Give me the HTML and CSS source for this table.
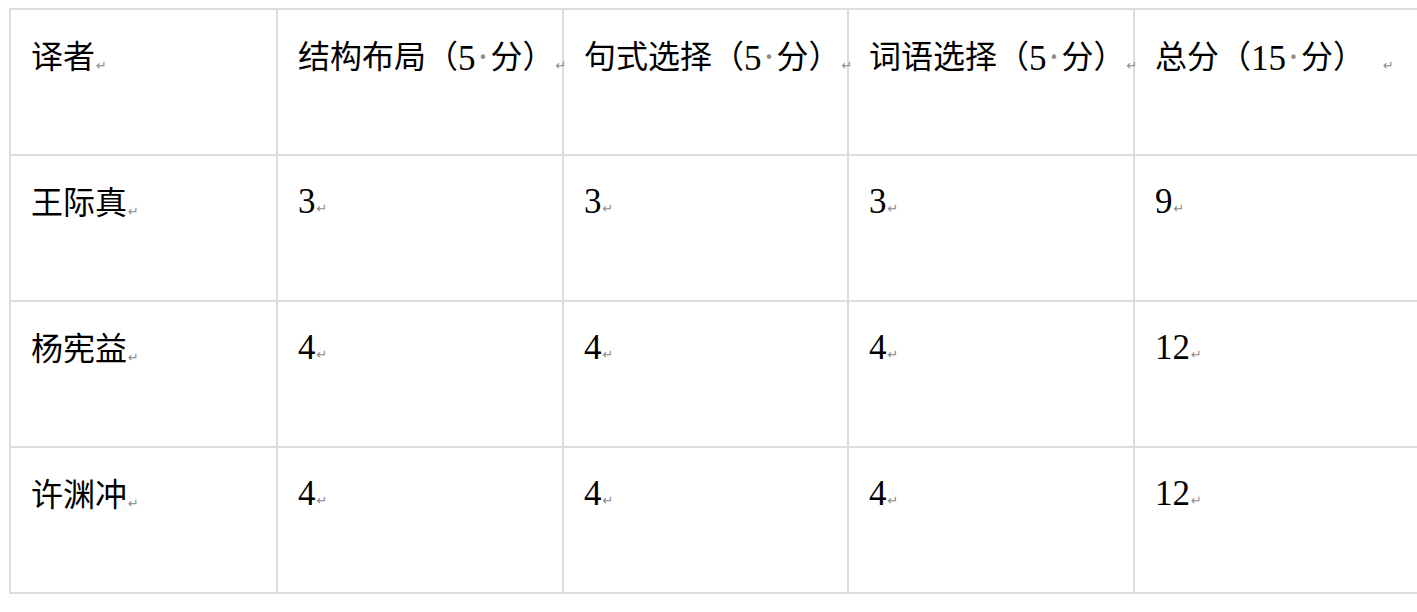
FILE: index.html
```html
<!DOCTYPE html>
<html lang="zh-CN">
<head>
<meta charset="utf-8">
<title>评分表</title>
<link rel="stylesheet" href="styles.css">
</head>
<body>
<div class="sheet">
  <div class="grid">
    <div class="cell"><span class="zh">译者</span><span class="pm">↵</span></div>
    <div class="cell"><span class="zh">结构布局（</span><span class="num">5</span><span class="sp">•</span><span class="zh">分）</span><span class="pm">↵</span></div>
    <div class="cell"><span class="zh">句式选择（</span><span class="num">5</span><span class="sp">•</span><span class="zh">分）</span><span class="pm">↵</span></div>
    <div class="cell"><span class="zh">词语选择（</span><span class="num">5</span><span class="sp">•</span><span class="zh">分）</span><span class="pm">↵</span></div>
    <div class="cell"><span class="zh">总分（</span><span class="num">15</span><span class="sp">•</span><span class="zh">分）</span><span class="pm gap">↵</span></div>

    <div class="cell"><span class="zh">王际真</span><span class="pm">↵</span></div>
    <div class="cell"><span class="num">3</span><span class="pm">↵</span></div>
    <div class="cell"><span class="num">3</span><span class="pm">↵</span></div>
    <div class="cell"><span class="num">3</span><span class="pm">↵</span></div>
    <div class="cell"><span class="num">9</span><span class="pm">↵</span></div>

    <div class="cell"><span class="zh">杨宪益</span><span class="pm">↵</span></div>
    <div class="cell"><span class="num">4</span><span class="pm">↵</span></div>
    <div class="cell"><span class="num">4</span><span class="pm">↵</span></div>
    <div class="cell"><span class="num">4</span><span class="pm">↵</span></div>
    <div class="cell"><span class="num">12</span><span class="pm">↵</span></div>

    <div class="cell"><span class="zh">许渊冲</span><span class="pm">↵</span></div>
    <div class="cell"><span class="num">4</span><span class="pm">↵</span></div>
    <div class="cell"><span class="num">4</span><span class="pm">↵</span></div>
    <div class="cell"><span class="num">4</span><span class="pm">↵</span></div>
    <div class="cell"><span class="num">12</span><span class="pm">↵</span></div>
  </div>
</div>
</body>
</html>
```

FILE: styles.css
```css
html, body {
  margin: 0;
  padding: 0;
  background: #ffffff;
  overflow: hidden;
}

.sheet {
  padding: 8px 0 0 9px;
}

.grid {
  display: grid;
  grid-template-columns: 267px 286px 285px 286px 286px;
  grid-template-rows: repeat(4, 146px);
  width: max-content;
  border-left: 2px solid #dcdce1;
  border-top: 2px solid #dcdce1;
}

.cell {
  box-sizing: border-box;
  border-right: 2px solid #dcdce1;
  border-bottom: 2px solid #dcdce1;
  padding: 26px 0 0 20px;
  line-height: 40px;
  white-space: nowrap;
  color: #000000;
}

.zh {
  font-family: "Noto Sans CJK SC", "Noto Sans", sans-serif;
  font-size: 32px;
  font-weight: 400;
  position: relative;
  top: -2px;
}

.num {
  font-family: "Liberation Serif", "DejaVu Serif", serif;
  font-size: 35px;
}

.sp {
  font-family: "DejaVu Sans", sans-serif;
  font-size: 15px;
  color: #8c8c8c;
  display: inline-block;
  width: 15px;
  text-align: center;
  vertical-align: 7px;
}

.pm {
  font-family: "DejaVu Sans", sans-serif;
  font-size: 13px;
  color: #8a8a8a;
  margin-left: 1px;
}

.pm.gap {
  margin-left: 18px;
}
```
